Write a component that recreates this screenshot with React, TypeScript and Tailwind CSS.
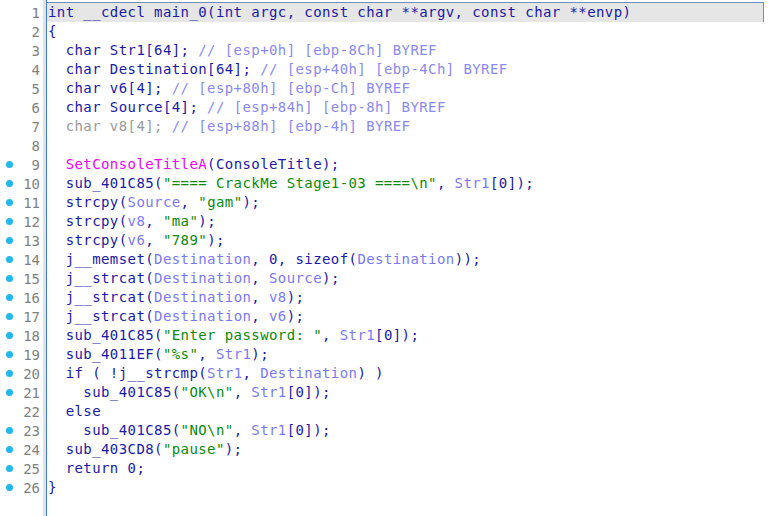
type Tok = [string, string];

const N = "text-[#1a1aa6]";
const V = "text-[#7a7af2]";
const S = "text-[#0a8a0a]";
const C = "text-[#8a8af0]";
const G = "text-[#9a9a9a]";
const M = "text-[#f000f0]";

const lines: { toks: Tok[]; dot: boolean }[] = [
  { dot: false, toks: [[N, "int __cdecl main_0(int argc, const char **argv, const char **envp)"]] },
  { dot: false, toks: [[N, "{"]] },
  { dot: false, toks: [[N, "  char Str1[64]; "], [C, "// [esp+0h] [ebp-8Ch] BYREF"]] },
  { dot: false, toks: [[N, "  char Destination[64]; "], [C, "// [esp+40h] [ebp-4Ch] BYREF"]] },
  { dot: false, toks: [[N, "  char v6[4]; "], [C, "// [esp+80h] [ebp-Ch] BYREF"]] },
  { dot: false, toks: [[N, "  char Source[4]; "], [C, "// [esp+84h] [ebp-8h] BYREF"]] },
  { dot: false, toks: [[G, "  char v8[4]; "], [C, "// [esp+88h] [ebp-4h] BYREF"]] },
  { dot: false, toks: [] },
  { dot: true, toks: [[M, "  SetConsoleTitleA"], [N, "(ConsoleTitle);"]] },
  { dot: true, toks: [[N, "  sub_401C85("], [S, '"==== CrackMe Stage1-03 ====\\n"'], [N, ", "], [V, "Str1"], [N, "[0]);"]] },
  { dot: true, toks: [[N, "  strcpy("], [V, "Source"], [N, ", "], [S, '"gam"'], [N, ");"]] },
  { dot: true, toks: [[N, "  strcpy("], [V, "v8"], [N, ", "], [S, '"ma"'], [N, ");"]] },
  { dot: true, toks: [[N, "  strcpy("], [V, "v6"], [N, ", "], [S, '"789"'], [N, ");"]] },
  { dot: true, toks: [[N, "  j__memset("], [V, "Destination"], [N, ", 0, sizeof("], [V, "Destination"], [N, "));"]] },
  { dot: true, toks: [[N, "  j__strcat("], [V, "Destination"], [N, ", "], [V, "Source"], [N, ");"]] },
  { dot: true, toks: [[N, "  j__strcat("], [V, "Destination"], [N, ", "], [V, "v8"], [N, ");"]] },
  { dot: true, toks: [[N, "  j__strcat("], [V, "Destination"], [N, ", "], [V, "v6"], [N, ");"]] },
  { dot: true, toks: [[N, "  sub_401C85("], [S, '"Enter password: "'], [N, ", "], [V, "Str1"], [N, "[0]);"]] },
  { dot: true, toks: [[N, "  sub_4011EF("], [S, '"%s"'], [N, ", "], [V, "Str1"], [N, ");"]] },
  { dot: true, toks: [[N, "  if ( !j__strcmp("], [V, "Str1"], [N, ", "], [V, "Destination"], [N, ") )"]] },
  { dot: true, toks: [[N, "    sub_401C85("], [S, '"OK\\n"'], [N, ", "], [V, "Str1"], [N, "[0]);"]] },
  { dot: false, toks: [[N, "  else"]] },
  { dot: true, toks: [[N, "    sub_401C85("], [S, '"NO\\n"'], [N, ", "], [V, "Str1"], [N, "[0]);"]] },
  { dot: true, toks: [[N, "  sub_403CD8("], [S, '"pause"'], [N, ");"]] },
  { dot: true, toks: [[N, "  return 0;"]] },
  { dot: true, toks: [[N, "}"]] },
];

const mono = "font-['DejaVu_Sans_Mono',monospace] text-[14px] tracking-[0.41px]";

export default function App() {
  return (
    <div className={`flex h-[516px] w-[774px] overflow-hidden bg-white ${mono}`}>
      {/* gutter */}
      <div className="w-[43px] shrink-0 pt-[3px]">
        {lines.map((l, i) => (
          <div key={i} className="flex h-[19px] items-center justify-between pl-[6px] pr-[3px]">
            {l.dot ? <span className="h-[7px] w-[7px] rounded-full bg-[#22b8ee]" /> : <span />}
            <span className="leading-none tracking-normal text-[#7f7f7f]">{i + 1}</span>
          </div>
        ))}
      </div>
      <div className="w-[3px] shrink-0 bg-[#e2e2e2]" />
      <div className="w-px shrink-0 bg-[#3f7fc8]" />

      {/* code */}
      <div className="flex-1 pt-[3px]">
        {lines.map((l, i) => (
          <div
            key={i}
            className={
              i === 0
                ? "-mt-px flex h-[20px] w-[717px] items-center whitespace-pre border-t border-r border-[#6f8fb8] bg-[#e6e6e6] pl-[1px]"
                : "flex h-[19px] items-center whitespace-pre pl-[1px]"
            }
          >
            {l.toks.map(([c, t], j) => (
              <span key={j} className={c}>
                {t}
              </span>
            ))}
          </div>
        ))}
      </div>
    </div>
  );
}
